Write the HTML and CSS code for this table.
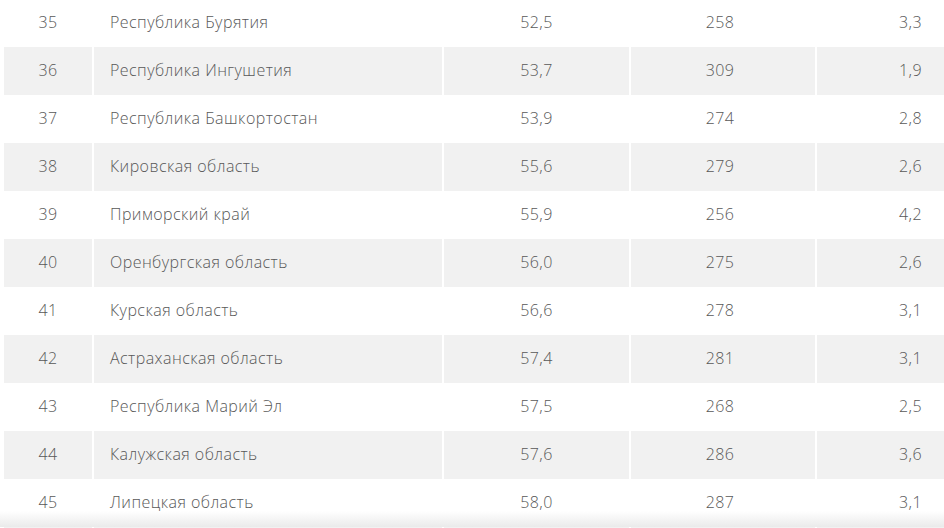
FILE: index.html
```html
<!DOCTYPE html>
<html lang="ru">
<head>
<meta charset="utf-8">
<link rel="stylesheet" href="styles.css">
</head>
<body>
<div class="wrap">
<table class="rating">
<tbody>
<tr><td class="num">35</td><td class="name">Республика Бурятия</td><td class="c">52,5</td><td class="c">258</td><td class="r">3,3</td></tr>
<tr class="alt"><td class="num">36</td><td class="name">Республика Ингушетия</td><td class="c">53,7</td><td class="c">309</td><td class="r">1,9</td></tr>
<tr><td class="num">37</td><td class="name">Республика Башкортостан</td><td class="c">53,9</td><td class="c">274</td><td class="r">2,8</td></tr>
<tr class="alt"><td class="num">38</td><td class="name">Кировская область</td><td class="c">55,6</td><td class="c">279</td><td class="r">2,6</td></tr>
<tr><td class="num">39</td><td class="name">Приморский край</td><td class="c">55,9</td><td class="c">256</td><td class="r">4,2</td></tr>
<tr class="alt"><td class="num">40</td><td class="name">Оренбургская область</td><td class="c">56,0</td><td class="c">275</td><td class="r">2,6</td></tr>
<tr><td class="num">41</td><td class="name">Курская область</td><td class="c">56,6</td><td class="c">278</td><td class="r">3,1</td></tr>
<tr class="alt"><td class="num">42</td><td class="name">Астраханская область</td><td class="c">57,4</td><td class="c">281</td><td class="r">3,1</td></tr>
<tr><td class="num">43</td><td class="name">Республика Марий Эл</td><td class="c">57,5</td><td class="c">268</td><td class="r">2,5</td></tr>
<tr class="alt"><td class="num">44</td><td class="name">Калужская область</td><td class="c">57,6</td><td class="c">286</td><td class="r">3,6</td></tr>
<tr><td class="num">45</td><td class="name">Липецкая область</td><td class="c">58,0</td><td class="c">287</td><td class="r">3,1</td></tr>
<tr class="alt"><td class="num"></td><td class="name"></td><td class="c"></td><td class="c"></td><td class="r"></td></tr>
</tbody>
</table>
<div class="fade"></div>
</div>
</body>
</html>
```
FILE: styles.css
```css
html, body {
  margin: 0;
  padding: 0;
  background: #fff;
  overflow: hidden;
}
body {
  font-family: "Open Sans", "Liberation Sans", sans-serif;
  font-weight: 300;
  font-size: 16px;
  letter-spacing: 0.45px;
  color: #585858;
}
.wrap {
  position: relative;
  height: 528px;
  overflow: hidden;
  padding-left: 2px;
}
.rating {
  border-collapse: separate;
  border-spacing: 2px 0;
  margin-top: -1px;
  width: 946px;
  table-layout: fixed;
}
.rating td {
  height: 48px;
  padding: 0 0 2px 0;
  box-sizing: border-box;
  vertical-align: middle;
  white-space: nowrap;
}
.rating tr.alt td {
  background: #f1f1f1;
}
.rating td.num { width: 88px; text-align: center; }
.rating td.name { width: 348px; text-align: left; padding-left: 16px; }
.rating td.c { width: 185px; text-align: center; }
.rating td:nth-child(4) { width: 184px; padding-right: 6px; }
.rating td.r { text-align: right; padding-right: 24px; }
.fade {
  position: absolute;
  left: 0;
  right: 0;
  bottom: 1px;
  height: 16px;
  background: linear-gradient(to bottom, rgba(255,255,255,0), rgba(232,232,232,0.9));
  pointer-events: none;
}
```
